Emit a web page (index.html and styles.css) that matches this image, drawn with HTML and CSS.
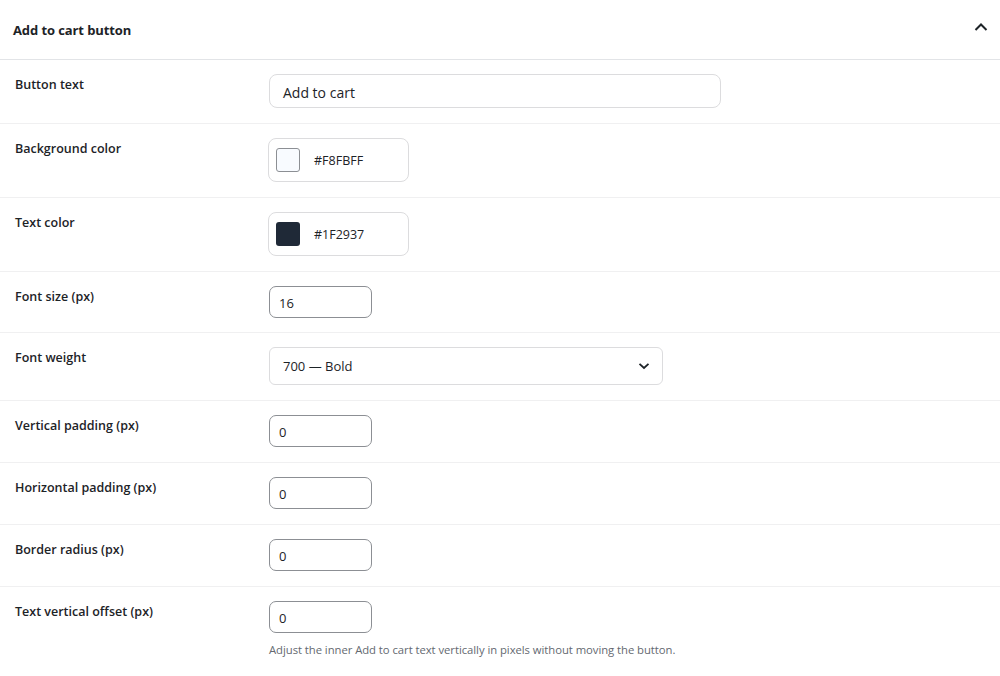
FILE: index.html
```html
<!DOCTYPE html>
<html>
<head>
<meta charset="utf-8">
<link rel="stylesheet" href="styles.css">
</head>
<body>
<div class="panel">
  <div class="panel-head">
    <h2 class="panel-title">Add to cart button</h2>
    <svg class="chev-up" width="14" height="10" viewBox="0 0 14 10"><path d="M1.5 8 L7 2.5 L12.5 8" fill="none" stroke="#1d2327" stroke-width="2"/></svg>
  </div>
  <div class="row">
    <div class="label">Button text</div>
    <div class="field"><div class="text-input">Add to cart</div></div>
  </div>
  <div class="row">
    <div class="label">Background color</div>
    <div class="field"><div class="color-input"><span class="swatch swatch-light"></span><span class="hex">#F8FBFF</span></div></div>
  </div>
  <div class="row">
    <div class="label">Text color</div>
    <div class="field"><div class="color-input"><span class="swatch swatch-dark"></span><span class="hex">#1F2937</span></div></div>
  </div>
  <div class="row row-tight">
    <div class="label">Font size (px)</div>
    <div class="field"><div class="num-input">16</div></div>
  </div>
  <div class="row">
    <div class="label">Font weight</div>
    <div class="field"><div class="select">700 — Bold<svg class="chev-down" width="12" height="8" viewBox="0 0 12 8"><path d="M1.5 1.8 L6 6 L10.5 1.8" fill="none" stroke="#1d2327" stroke-width="1.8"/></svg></div></div>
  </div>
  <div class="row">
    <div class="label">Vertical padding (px)</div>
    <div class="field"><div class="num-input">0</div></div>
  </div>
  <div class="row">
    <div class="label">Horizontal padding (px)</div>
    <div class="field"><div class="num-input">0</div></div>
  </div>
  <div class="row">
    <div class="label">Border radius (px)</div>
    <div class="field"><div class="num-input">0</div></div>
  </div>
  <div class="row row-last">
    <div class="label">Text vertical offset (px)</div>
    <div class="field"><div class="num-input">0</div><p class="desc">Adjust the inner Add to cart text vertically in pixels without moving the button.</p></div>
  </div>
</div>
</body>
</html>
```
FILE: styles.css
```css
html, body {
  margin: 0;
  padding: 0;
  background: #ffffff;
}
body {
  font-family: "Open Sans", "Noto Sans", sans-serif;
  color: #1d2327;
  width: 1000px;
  height: 676px;
  overflow: hidden;
}
.panel {
  display: flex;
  flex-direction: column;
}
.panel-head {
  height: 59px;
  border-bottom: 1px solid #e2e4e7;
  display: flex;
  align-items: center;
  justify-content: space-between;
  padding: 0 12px 0 13px;
}
.panel-title {
  margin: 0;
  font-size: 13px;
  font-weight: 700;
  letter-spacing: -0.1px;
}
.chev-up {
  position: relative;
  top: -3px;
}
.row {
  display: grid;
  grid-template-columns: 254px 1fr;
  border-bottom: 1px solid #f0f0f1;
  padding: 14px 0 15px 15px;
}
.row-tight {
  padding-bottom: 14px;
}
.row-last {
  border-bottom: none;
}
.label {
  font-size: 12.5px;
  font-weight: 600;
  line-height: 18px;
  padding-top: 2px;
}
.field {
  display: flex;
  flex-direction: column;
  align-items: flex-start;
}
.text-input {
  width: 452px;
  height: 34px;
  box-sizing: border-box;
  border: 1px solid #dcdcde;
  border-radius: 8px;
  padding: 2px 13px 0;
  display: flex;
  align-items: center;
  font-size: 14px;
}
.color-input {
  width: 141px;
  height: 44px;
  margin-left: -1px;
  box-sizing: border-box;
  border: 1px solid #dcdcde;
  border-radius: 8px;
  display: flex;
  align-items: center;
  padding-left: 7px;
  gap: 14px;
}
.swatch {
  width: 24px;
  height: 24px;
  box-sizing: border-box;
  border-radius: 3px;
}
.swatch-light {
  background: #f8fbff;
  border: 1px solid #8c8f94;
}
.swatch-dark {
  background: #1f2937;
}
.hex {
  font-size: 12.5px;
  padding-top: 1px;
}
.num-input {
  width: 103px;
  height: 32px;
  box-sizing: border-box;
  border: 1px solid #8c8f94;
  border-radius: 7px;
  padding: 2px 9px 0;
  display: flex;
  align-items: center;
  font-size: 13px;
}
.select {
  width: 394px;
  height: 38px;
  box-sizing: border-box;
  border: 1px solid #dcdcde;
  border-radius: 6px;
  padding: 0 12px 0 13px;
  display: flex;
  align-items: center;
  justify-content: space-between;
  font-size: 13px;
}
.desc {
  margin: 9px 0 0;
  font-size: 11.3px;
  color: #646970;
  letter-spacing: -0.05px;
}
```
